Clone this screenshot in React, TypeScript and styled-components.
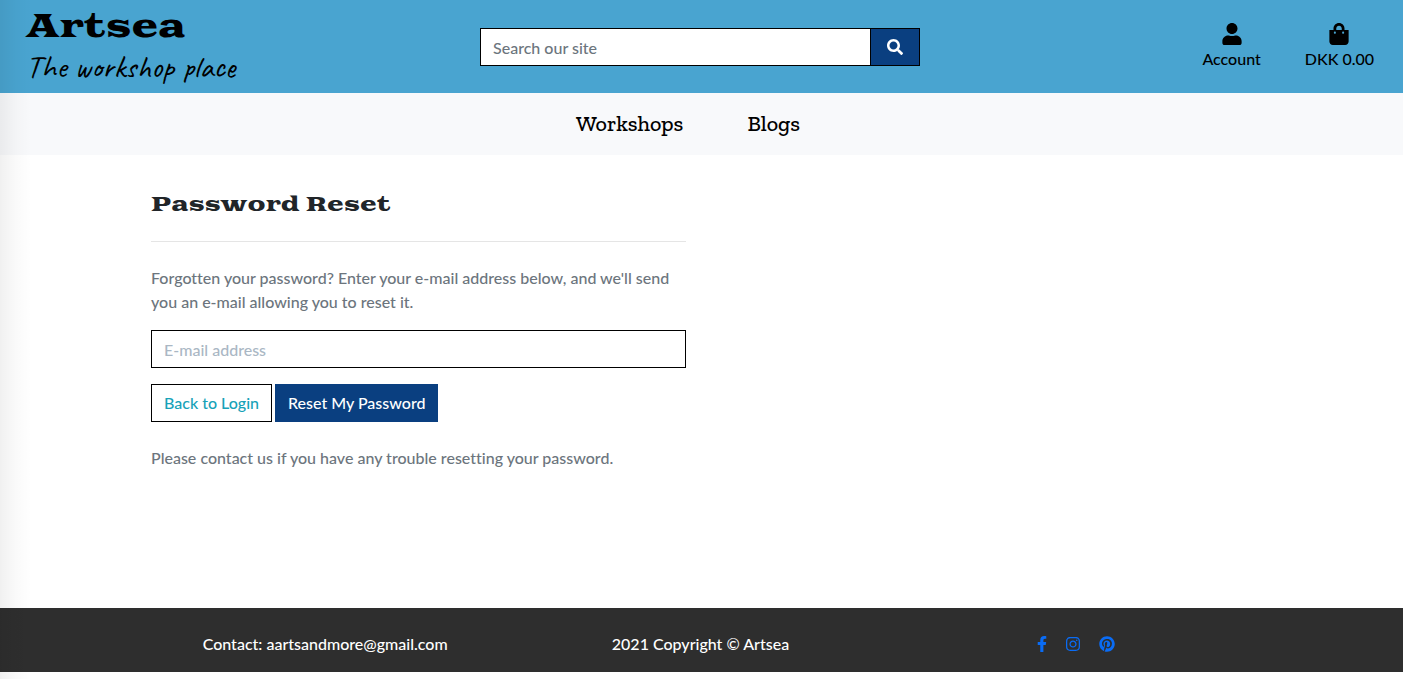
import React from 'react';
import styled, { createGlobalStyle } from 'styled-components';
import {
  FaUser,
  FaShoppingBag,
  FaSearch,
  FaFacebookF,
  FaInstagram,
  FaPinterest,
} from 'react-icons/fa';

const GlobalStyle = createGlobalStyle`
  *, *::before, *::after { box-sizing: border-box; }
  body {
    margin: 0;
    background: #fff;
    color: #212529;
    font: 500 16px/24px Lato, "Liberation Sans", sans-serif;
    font-variant-ligatures: none;
  }
  a { text-decoration: none; }
`;

const Page = styled.div`
  position: relative;
  min-height: 100vh;
`;

const EdgeShade = styled.div`
  position: absolute;
  top: 0;
  bottom: 0;
  left: 0;
  width: 32px;
  pointer-events: none;
  background: linear-gradient(to right, rgba(0, 0, 0, 0.06), rgba(0, 0, 0, 0.02) 50%, rgba(0, 0, 0, 0));
`;

const Header = styled.header`
  display: grid;
  grid-template-columns: 1fr minmax(200px, 440px) 1fr;
  align-items: center;
  min-height: 93px;
  padding: 0 29px 0 26px;
  background: #49a4d0;
`;

const Brand = styled.a`
  display: block;
  color: #000;
  white-space: nowrap;
`;

const BrandName = styled.span`
  display: block;
  font: 400 32px/40px "Goblin One", "DejaVu Serif", serif;
`;

const Tagline = styled.span`
  display: block;
  padding: 4px 0;
  font: 500 32px/32px Caveat, Lato, cursive;
`;

const SearchForm = styled.form`
  display: flex;
  height: 38px;
  border: 1px solid #000;
`;

const SearchInput = styled.input`
  flex: 1;
  min-width: 0;
  padding: 2px 12px 0;
  border: 0;
  background: #fff;
  color: #495057;
  font: inherit;
  &::placeholder { color: #6c757d; opacity: 1; }
`;

const SearchButton = styled.button`
  display: grid;
  place-items: center;
  width: 49px;
  padding: 0;
  border: 0;
  border-left: 1px solid #000;
  background: #0a3f80;
  color: #fff;
  font-size: 16px;
`;

const UserLinks = styled.nav`
  display: flex;
  justify-content: flex-end;
  gap: 44px;
`;

const UserLink = styled.a`
  display: flex;
  flex-direction: column;
  align-items: center;
  gap: 2px;
  color: #000;
  white-space: nowrap;
  svg { width: 22px; height: 22px; }
`;

const MainNav = styled.nav`
  display: flex;
  justify-content: center;
  gap: 64px;
  padding: 16px 27px 16px 0;
  background: #f8f9fb;
`;

const NavLink = styled.a`
  color: #000;
  font: 500 22px/30px "Roboto Slab", "Zilla Slab", "DejaVu Serif", serif;
`;

const Main = styled.main`
  display: grid;
  grid-template-columns: 1fr 1fr;
  gap: 32px;
  max-width: 1101px;
  min-height: 453px;
  margin: 0 auto;
  padding-top: 34px;
`;

const Title = styled.h1`
  margin: 0 0 20px;
  font: 400 20px/32px "Goblin One", "DejaVu Serif", serif;
`;

const Rule = styled.hr`
  margin: 0 0 24px;
  border: 0;
  border-top: 1px solid #e5e5e5;
`;

const Text = styled.p`
  margin: 0 0 16px;
  color: #6c757d;
`;

const EmailInput = styled.input`
  display: block;
  width: 100%;
  height: 38px;
  padding: 0 12px;
  border: 1px solid #000;
  border-radius: 0;
  background: #fff;
  color: #495057;
  font: inherit;
  &::placeholder { color: #aab7c4; opacity: 1; }
`;

const Actions = styled.div`
  display: flex;
  gap: 3px;
  margin: 16px 0 24px;
`;

const BackLink = styled.a`
  height: 38px;
  padding: 6px 12px;
  border: 1px solid #000;
  color: #17a2b8;
`;

const SubmitButton = styled.button`
  height: 38px;
  padding: 0 13px;
  border: 0;
  background: #0a3f80;
  color: #fff;
  font: inherit;
`;

const Footer = styled.footer`
  background: #2e2e2e;
  color: #fff;
  margin-bottom: 7px;
`;

const FooterInner = styled.div`
  display: grid;
  grid-template-columns: repeat(3, 1fr);
  align-items: center;
  max-width: 1128px;
  min-height: 64px;
  margin: 0 auto;
  padding: 8px 2px 0 0;
  text-align: center;
`;

const Social = styled.div`
  display: flex;
  justify-content: center;
  gap: 18px;
`;

const SocialLink = styled.a`
  display: flex;
  color: #0a6cf5;
  font-size: 16px;
  &:first-child svg { width: 10px; }
`;

export default function App() {
  return (
    <Page>
      <GlobalStyle />
      <Header>
        <Brand href="#">
          <BrandName>Artsea</BrandName>
          <Tagline>The workshop place</Tagline>
        </Brand>
        <SearchForm>
          <SearchInput type="text" aria-label="Search our site" placeholder="Search our site" />
          <SearchButton type="submit" aria-label="Search"><FaSearch /></SearchButton>
        </SearchForm>
        <UserLinks>
          <UserLink href="#"><FaUser />Account</UserLink>
          <UserLink href="#"><FaShoppingBag />DKK 0.00</UserLink>
        </UserLinks>
      </Header>
      <MainNav>
        <NavLink href="#">Workshops</NavLink>
        <NavLink href="#">Blogs</NavLink>
      </MainNav>
      <Main>
        <section>
          <Title>Password Reset</Title>
          <Rule />
          <Text>
            Forgotten your password? Enter your e-mail address below, and we'll send you an e-mail
            allowing you to reset it.
          </Text>
          <form>
            <EmailInput type="email" aria-label="E-mail address" placeholder="E-mail address" />
            <Actions>
              <BackLink href="#">Back to Login</BackLink>
              <SubmitButton type="submit">Reset My Password</SubmitButton>
            </Actions>
          </form>
          <Text>Please contact us if you have any trouble resetting your password.</Text>
        </section>
      </Main>
      <Footer>
        <FooterInner>
          <span>Contact: aartsandmore@gmail.com</span>
          <span>2021 Copyright © Artsea</span>
          <Social>
            <SocialLink href="#" aria-label="Facebook"><FaFacebookF /></SocialLink>
            <SocialLink href="#" aria-label="Instagram"><FaInstagram /></SocialLink>
            <SocialLink href="#" aria-label="Pinterest"><FaPinterest /></SocialLink>
          </Social>
        </FooterInner>
      </Footer>
      <EdgeShade />
    </Page>
  );
}
